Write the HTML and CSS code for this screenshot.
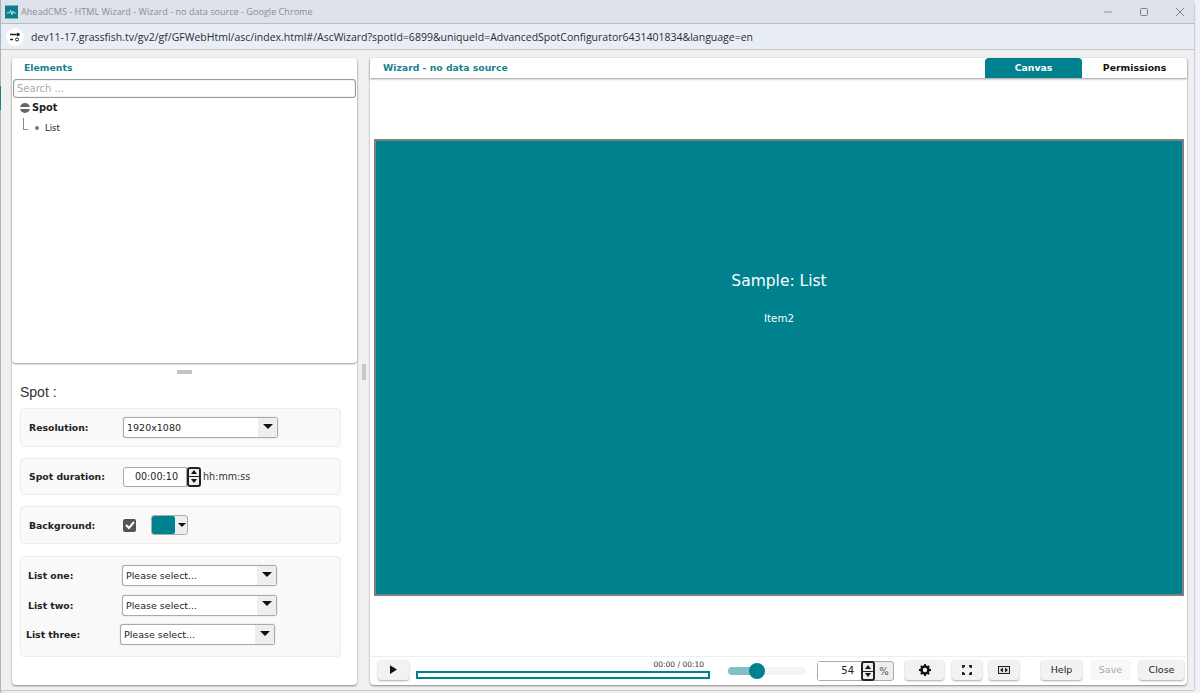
FILE: index.html
```html
<!DOCTYPE html>
<html>

<head>
	<title>AheadCMS - HTML Wizard</title>
	<link rel="stylesheet" href="styles.css">
</head>

<body>
	<div class="window">
		<div class="titlebar">
			<svg class="app-icon" width="13" height="14" viewBox="0 0 14 14">
				<rect width="14" height="14" fill="#0b7f8c" />
				<path d="M2 8h3l1-3 1.500 5 1-4 .8 2H12" fill="none" stroke="#bfe3e6" stroke-width="1" />
			</svg>
			<span class="title-text">AheadCMS - HTML Wizard - Wizard - no data source - Google Chrome</span>
			<div class="win-buttons">
				<svg width="10" height="10" viewBox="0 0 10 10">
					<path d="M1 5h8" stroke="#8a8f96" stroke-width="1" />
				</svg>
				<svg width="10" height="10" viewBox="0 0 10 10">
					<rect x="1.500" y="1.500" width="7" height="7" rx="1" fill="none" stroke="#7d8288" stroke-width="1" />
				</svg>
				<svg width="10" height="10" viewBox="0 0 10 10">
					<path d="M1 1l8 8M9 1l-8 8" stroke="#7d8288" stroke-width="1" />
				</svg>
			</div>
		</div>
		<div class="urlbar">
			<span class="site-btn">
				<svg width="12" height="10" viewBox="0 0 12 10">
					<path d="M1 2.500h6M1 7.500h3" stroke="#222" stroke-width="1.400" />
					<circle cx="9" cy="2.500" r="1.700" fill="#222" />
					<circle cx="8" cy="7.500" r="1.500" fill="none" stroke="#222" />
				</svg>
			</span>
			<span class="url-text">dev11-17.grassfish.tv/gv2/gf/GFWebHtml/asc/index.html#/AscWizard?spotId=6899&amp;uniqueId=AdvancedSpotConfigurator6431401834&amp;language=en</span>
		</div>

		<div class="content">
			<div class="left-col">
				<div class="panel tree-panel">
					<div class="panel-head">Elements</div>
					<input class="search" type="text" placeholder="Search ...">
					<div class="tree-root">
						<span class="minus"></span>
						<b>Spot</b>
					</div>
					<div class="tree-child">
						<span class="elbow"></span>
						<span class="dot"></span>
						List
					</div>
				</div>
				<div class="grip-row"><span class="grip"></span></div>
				<div class="props">
					<div class="props-title">Spot :</div>

					<div class="group group-res">
						<label class="lbl">Resolution:</label>
						<div class="select sel-wide"><span>1920x1080</span><i class="caret-box"><i class="caret"></i></i></div>
					</div>

					<div class="group group-dur">
						<label class="lbl">Spot duration:</label>
						<input class="time" type="text" value="00:00:10">
						<div class="spin">
							<span class="up"></span>
							<span class="down"></span>
						</div>
						<span class="unit">hh:mm:ss</span>
					</div>

					<div class="group group-bg">
						<label class="lbl">Background:</label>
						<span class="check">
							<svg width="10" height="8" viewBox="0 0 10 8">
								<path d="M1 4l3 3 5-6" fill="none" stroke="#fff" stroke-width="2" />
							</svg>
						</span>
						<div class="color-pick"><span class="swatch"></span><i class="caret-mini"></i></div>
					</div>

					<div class="group group-lists">
						<div class="list-row">
							<label class="lbl">List one:</label>
							<div class="select"><span>Please select...</span><i class="caret-box"><i class="caret"></i></i></div>
						</div>
						<div class="list-row">
							<label class="lbl">List two:</label>
							<div class="select"><span>Please select...</span><i class="caret-box"><i class="caret"></i></i></div>
						</div>
						<div class="list-row list-shift">
							<label class="lbl">List three:</label>
							<div class="select"><span>Please select...</span><i class="caret-box"><i class="caret"></i></i></div>
						</div>
					</div>
				</div>
			</div>

			<div class="splitter"><span></span></div>

			<div class="panel right-panel">
				<div class="right-head">
					<span class="wizard-title">Wizard - no data source</span>
					<div class="tabs">
						<span class="tab tab-on">Canvas</span>
						<span class="tab tab-perm">Permissions</span>
					</div>
				</div>
				<div class="stage">
					<div class="canvas">
						<div class="sample">Sample: List</div>
						<div class="item">Item2</div>
					</div>
				</div>
				<div class="toolbar">
					<button class="btn btn-play">
						<svg width="7" height="9" viewBox="0 0 8 10"><path d="M0 0l8 5-8 5z" fill="#111" /></svg>
					</button>
					<div class="progress">
						<div class="time-read">00:00 / 00:10</div>
						<div class="bar"></div>
					</div>
					<div class="zoom-slider"><span class="fill"></span><span class="knob"></span></div>
					<div class="percent">
						<span class="pct-val">54</span>
						<div class="spin">
							<span class="up"></span>
							<span class="down"></span>
						</div>
						<span class="pct-sign">%</span>
					</div>
					<button class="btn btn-icon btn-gear">
						<svg width="12" height="12" viewBox="0 0 12 12">
							<circle cx="6" cy="6" r="3.500" fill="none" stroke="#111" stroke-width="2.600" />
							<path d="M6 0v2M6 10v2M0 6h2M10 6h2M1.800 1.800l1.400 1.400M8.800 8.800l1.400 1.400M10.200 1.800L8.800 3.200M3.200 8.800l-1.400 1.400" stroke="#111" stroke-width="1.800" />
						</svg>
					</button>
					<button class="btn btn-icon btn-fit">
						<svg width="10" height="10" viewBox="0 0 10 10">
							<path d="M0 0h3v1.500L1.500 3H0zM10 0H7v1.500L8.500 3H10zM0 10h3V8.500L1.500 7H0zM10 10H7V8.500L8.500 7H10z" fill="#222" />
						</svg>
					</button>
					<button class="btn btn-icon btn-width">
						<svg width="12" height="8" viewBox="0 0 12 8">
							<rect x=".5" y=".5" width="11" height="7" fill="#e4e4e4" stroke="#222" />
							<path d="M2 4l3-2.500v5zM10 4L7 1.500v5z" fill="#222" />
						</svg>
					</button>
					<button class="btn btn-text btn-help">Help</button>
					<button class="btn btn-text btn-save" disabled>Save</button>
					<button class="btn btn-text btn-close">Close</button>
				</div>
			</div>
		</div>
	</div>
</body>

</html>
```

FILE: styles.css
```css
* {
	box-sizing: border-box;
}

html,
body {
	margin: 0;
	height: 100%;
	overflow: hidden;
}

body {
	font-family: "DejaVu Sans", sans-serif;
	font-size: 11px;
	color: #222;
	background: linear-gradient(#00818e, #00818e) no-repeat 0 86px / 1px 24px, linear-gradient(to right, #b9ccce 2px, #eef1f6 2px);
}

.window {
	height: 690px;
	margin-right: 6px;
	margin-left: 1px;
	display: flex;
	flex-direction: column;
	background: #f0f0f0;
	border-radius: 0 6px 0 0;
	box-shadow: 0 0 2px #777;
}

.titlebar {
	height: 24px;
	display: flex;
	align-items: center;
	padding-left: 4px;
	background: #dee2e9;
	border-bottom: 1px solid #b8bcc2;
	border-radius: 0 6px 0 0;
}

.app-icon {
	margin-right: 3px;
}

.title-text {
	font-family: "Open Sans", sans-serif;
	font-size: 9.100px;
	color: #8a8f96;
}

.win-buttons {
	margin-left: auto;
	display: flex;
	gap: 26px;
	padding-right: 9px;
}

.urlbar {
	height: 26px;
	display: flex;
	align-items: center;
	padding-left: 5px;
	background: #e9edf6;
	border-bottom: 1px solid #c4c7cc;
}

.site-btn {
	width: 18px;
	height: 18px;
	margin-right: 7px;
	border-radius: 50%;
	background: #fff;
	display: flex;
	align-items: center;
	justify-content: center;
}

.url-text {
	font-family: "Open Sans", sans-serif;
	font-size: 10.500px;
	color: #2a2d31;
}

.content {
	flex: 1;
	display: flex;
	padding: 8px 7px 5px 11px;
	min-height: 0;
}

.left-col {
	flex: none;
	width: 345px;
	display: flex;
	flex-direction: column;
	background: #fff;
	border-radius: 4px;
	box-shadow: 0 1px 2px #888;
}

.panel {
	background: #fff;
	border-radius: 4px;
}

.tree-panel {
	height: 305px;
	box-shadow: 0 1px 2px #999;
}

.panel-head {
	height: 21px;
	padding: 4px 0 0 12px;
	font-weight: bold;
	font-size: 9.300px;
	color: #14838f;
}

.search {
	display: block;
	width: 343px;
	height: 19px;
	margin-left: 1px;
	padding: 0 3px;
	font-family: "DejaVu Sans", sans-serif;
	font-size: 10px;
	border: 1px solid #999;
	border-radius: 3px;
	box-shadow: inset 0 0 1px #777;
}

.search::placeholder {
	color: #aaa;
}

.tree-root {
	display: flex;
	align-items: center;
	height: 19px;
	padding: 0 0 0 8px;
	font-size: 9.800px;
	color: #222;
}

.minus {
	width: 10px;
	height: 10px;
	margin-right: 2px;
	border-radius: 50%;
	background: linear-gradient(#666 0 4px, #fff 4px 6px, #666 6px);
}

.tree-child {
	display: flex;
	align-items: center;
	height: 22px;
	padding-left: 11px;
	font-size: 8.500px;
}

.elbow {
	width: 5px;
	height: 12px;
	margin: -8px 7px 0 0;
	border-left: 1px solid #888;
	border-bottom: 1px solid #888;
}

.dot {
	width: 4px;
	height: 4px;
	margin-right: 6px;
	border-radius: 50%;
	background: #777;
}

.grip-row {
	height: 17px;
	display: flex;
	align-items: center;
	justify-content: center;
}

.grip {
	width: 15px;
	height: 4px;
	background: #c4c4c4;
}

.props {
	flex: 1;
	padding: 0 16px 0 8px;
}

.props-title {
	height: 28px;
	padding-top: 4px;
	font-family: "Liberation Sans", sans-serif;
	font-size: 14px;
	color: #333;
}

.group {
	display: flex;
	align-items: center;
	margin-bottom: 11px;
	padding-left: 8px;
	background: #f9f9f9;
	border: 1px solid #ececec;
	border-radius: 4px;
}

.group-res {
	height: 39px;
}

.group-dur {
	height: 37px;
}

.group-bg {
	height: 38px;
	margin-bottom: 12px;
}

.group-lists {
	height: 101px;
	display: block;
	padding-top: 8px;
	padding-left: 7px;
}

.lbl {
	width: 94px;
	flex: none;
	font-weight: bold;
	font-size: 9.300px;
	color: #222;
}

.select {
	width: 155px;
	height: 21px;
	display: flex;
	align-items: center;
	justify-content: space-between;
	padding-left: 3px;
	font-size: 9.500px;
	background: #fff;
	border: 1px solid #aaa;
	border-radius: 3px;
	box-shadow: 0 0 1px #999;
}

.caret-box {
	width: 19px;
	height: 100%;
	display: flex;
	align-items: center;
	justify-content: center;
	background: #eee;
}

.caret {
	border-left: 5px solid transparent;
	border-right: 5px solid transparent;
	border-top: 5px solid #111;
	margin-top: -3px;
}

.time {
	width: 64px;
	height: 20px;
	padding: 0 8px 0 0;
	text-align: right;
	font-family: "DejaVu Sans", sans-serif;
	font-size: 9.600px;
	color: #222;
	border: 1px solid #aaa;
	border-radius: 3px 0 0 3px;
}

.spin {
	width: 14px;
	height: 20px;
	display: flex;
	flex-direction: column;
	flex: none;
	background: #eee;
	border: 2px solid #222;
	border-radius: 3px;
}

.spin span {
	flex: 1;
	display: flex;
	align-items: center;
	justify-content: center;
}

.spin .down {
	border-top: 1px solid #222;
}

.spin .up::before {
	content: "";
	border-left: 3px solid transparent;
	border-right: 3px solid transparent;
	border-bottom: 4px solid #111;
}

.spin .down::before {
	content: "";
	border-left: 3px solid transparent;
	border-right: 3px solid transparent;
	border-top: 4px solid #111;
}

.unit {
	margin-left: 2px;
	font-size: 9.600px;
	color: #333;
}

.check {
	width: 13px;
	height: 13px;
	display: flex;
	align-items: center;
	justify-content: center;
	background: #555;
	border-radius: 2px;
}

.color-pick {
	width: 37px;
	height: 20px;
	margin-left: 15px;
	display: flex;
	align-items: center;
	background: #eee;
	border: 1px solid #aaa;
	border-radius: 3px;
}

.swatch {
	width: 23px;
	height: 100%;
	background: #00818e;
	border-radius: 2px;
}

.caret-mini {
	margin-left: 3px;
	border-left: 4px solid transparent;
	border-right: 4px solid transparent;
	border-top: 4px solid #111;
}

.list-row {
	display: flex;
	align-items: center;
	height: 21px;
	margin-bottom: 8.500px;
}

.list-shift {
	margin-left: -2px;
}

.splitter {
	flex: none;
	width: 13px;
	display: flex;
	align-items: center;
	justify-content: center;
}

.splitter span {
	width: 4px;
	height: 16px;
	background: #c8c8c8;
}

.right-panel {
	flex: 1;
	min-width: 0;
	display: flex;
	flex-direction: column;
	box-shadow: 0 1px 2px #888;
}

.right-head {
	height: 20px;
	display: flex;
	justify-content: space-between;
	box-shadow: 0 1px 2px #999;
}

.wizard-title {
	padding: 4px 0 0 13px;
	font-weight: bold;
	font-size: 9.300px;
	color: #14838f;
}

.tabs {
	display: flex;
}

.tab {
	width: 97px;
	padding-bottom: 2px;
	display: flex;
	align-items: center;
	justify-content: center;
	font-weight: bold;
	font-size: 9.300px;
	color: #111;
}

.tab-perm {
	width: 105px;
}

.tab-on {
	color: #fff;
	background: #00818e;
	border-radius: 4px 4px 0 0;
}

.stage {
	flex: 1;
	padding: 61px 3px 0 4px;
}

.canvas {
	height: 457px;
	padding-top: 130px;
	text-align: center;
	color: #fff;
	background: #00818e;
	border: 2px solid #808080;
}

.sample {
	font-size: 15.500px;
	margin-top: 1px;
}

.item {
	margin-top: 22px;
	font-size: 10.300px;
}

.toolbar {
	height: 29px;
	display: flex;
	align-items: center;
	padding: 0 3px 0 8px;
	border-top: 1px solid #eee;
}

.btn {
	flex: none;
	height: 20px;
	margin-top: -3px;
	padding: 0;
	display: flex;
	align-items: center;
	justify-content: center;
	font-family: "DejaVu Sans", sans-serif;
	font-size: 9.500px;
	color: #222;
	background: #f2f2f2;
	border: none;
	border-radius: 3px;
	box-shadow: 0 1px 2px #aaa;
}

.btn-play {
	width: 31px;
}

.progress {
	flex: none;
	width: 294px;
	margin-left: 7px;
	margin-top: -3px;
}

.time-read {
	height: 11px;
	padding-right: 6px;
	text-align: right;
	font-size: 7.500px;
	color: #333;
}

.bar {
	height: 8px;
	background: #fff;
	border: 2px solid #00818e;
}

.zoom-slider {
	flex: none;
	position: relative;
	width: 78px;
	height: 8px;
	margin-left: 18px;
	background: #f4f4f4;
	border-radius: 4px;
}

.zoom-slider .fill {
	display: block;
	width: 30px;
	height: 100%;
	background: #80c0c7;
	border-radius: 4px 0 0 4px;
}

.zoom-slider .knob {
	position: absolute;
	left: 21px;
	top: -4px;
	width: 16px;
	height: 16px;
	background: #00818e;
	border-radius: 50%;
}

.percent {
	flex: none;
	width: 77px;
	height: 20px;
	margin-left: 11px;
	display: flex;
	align-items: center;
	background: #eee;
	border: 1px solid #aaa;
	border-radius: 3px;
}

.pct-val {
	width: 43px;
	height: 100%;
	padding-right: 7px;
	line-height: 18px;
	text-align: right;
	background: #fff;
	font-size: 10px;
}

.pct-sign {
	flex: 1;
	text-align: center;
	font-size: 10px;
	color: #555;
}

.btn-gear {
	width: 39px;
	margin-left: 11px;
}

.btn-fit {
	width: 30px;
	margin-left: 8px;
}

.btn-width {
	width: 30px;
	margin-left: 7px;
}

.btn-text {
	width: 41px;
}

.btn-help {
	margin-left: 22px;
}

.btn-save {
	margin-left: 8px;
	color: #aaa;
	background: #f8f8f8;
	box-shadow: none;
}

.btn-close {
	margin-left: 8px;
	width: 45px;
}
```
